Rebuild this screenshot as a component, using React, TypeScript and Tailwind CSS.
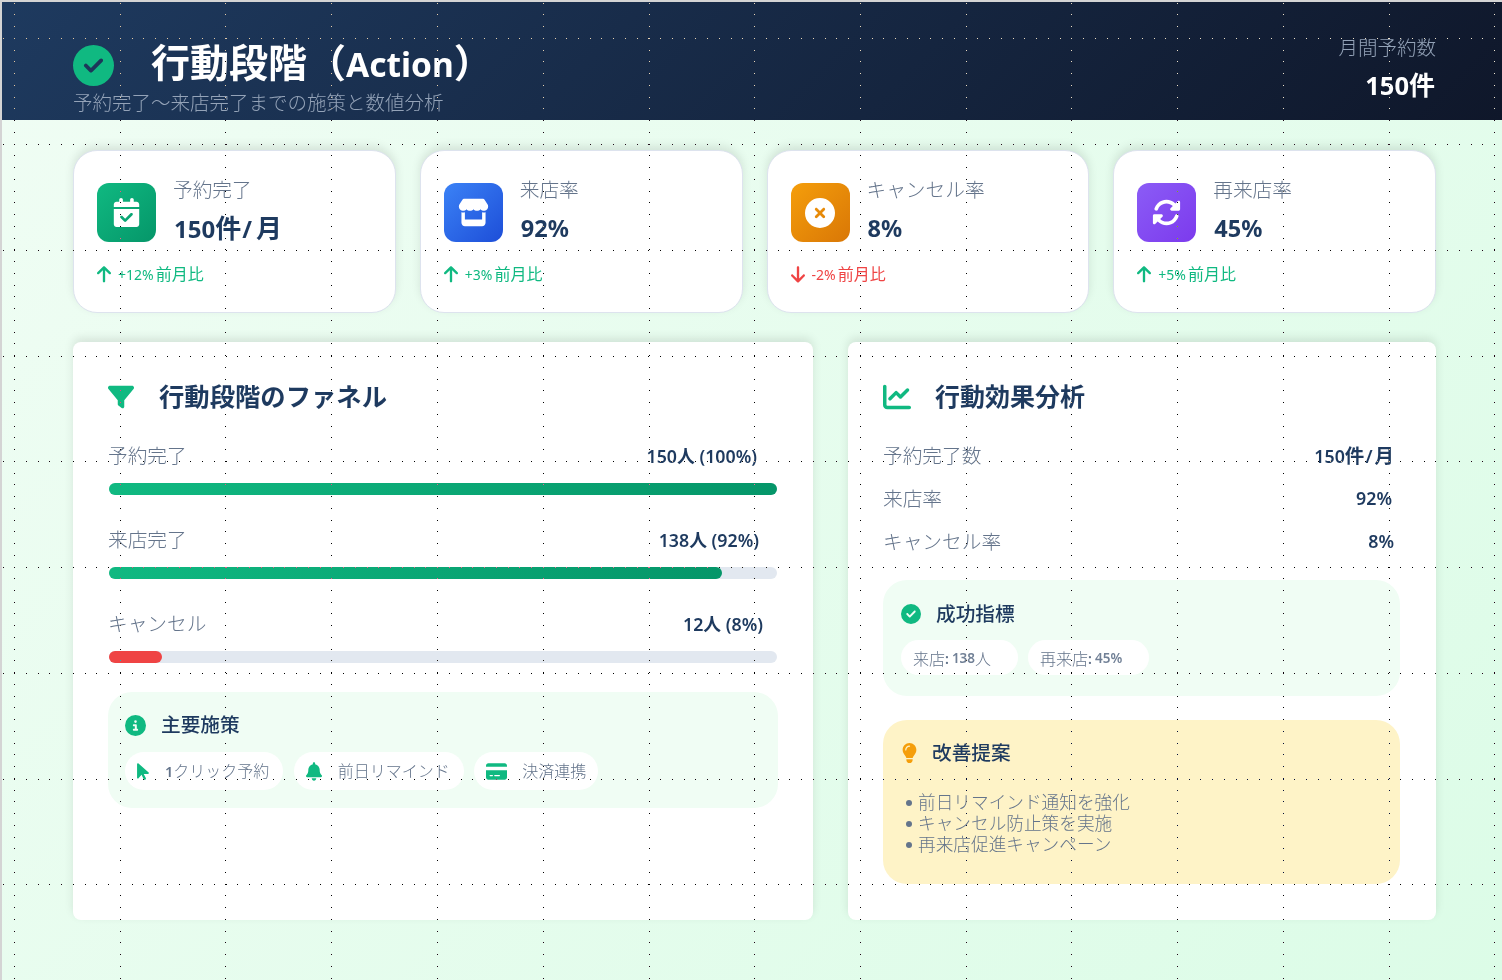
import React from "react";
import {
  FaCircleCheck, FaCalendarCheck, FaStore, FaCircleXmark, FaRotate, FaArrowUp, FaArrowDown,
  FaFilter, FaChartLine, FaCircleInfo, FaArrowPointer, FaBell, FaCreditCard, FaLightbulb,
} from "react-icons/fa6";

const font = { fontFamily: '"Noto Sans", "Noto Sans CJK JP", sans-serif' };

function Dots() {
  const xs = [14, 120, 225, 331, 437, 543, 649, 754, 860, 966, 1071, 1177, 1283, 1389, 1494];
  const ys = [38, 144, 250, 356, 461, 567, 673, 779, 884];
  let d = "";
  for (const x of xs) for (let k = 0; k < 84; k++) d += `M${x} ${Math.round(2.75 + 11.745 * k)}h1v1h-1z`;
  for (const y of ys) for (let k = 0; k < 128; k++) d += `M${Math.round(2.5 + 11.745 * k)} ${y}h1v1h-1z`;
  return (
    <svg className="absolute left-[-2px] top-[-2px] pointer-events-none mix-blend-difference" width="1502" height="980" shapeRendering="crispEdges">
      <path d={d} fill="#fff" />
    </svg>
  );
}

function StatCard({ icon, grad, label, value, delta, up }: { icon: React.ReactNode; grad: string; label: string; value: React.ReactNode; delta: string; up: boolean }) {
  return (
    <div className="h-[163px] rounded-3xl border border-[#dde3ee] bg-white pl-[23px] pt-[32px] shadow-[0_-4px_10px_rgba(0,0,0,0.1)]">
      <div className="flex items-start gap-[17px]">
        <div className={`flex h-[59px] w-[59px] items-center justify-center rounded-xl text-white ${grad}`}>{icon}</div>
        <div className="mt-[-8px]">
          <div className="text-[19.7px] leading-[30px] font-light text-[#64748b]">{label}</div>
          <div className="ml-px mt-[6px] h-[34px] text-[23.5px] leading-[34px] font-bold text-[#1e3a5f]">{value}</div>
        </div>
      </div>
      <div className={`mt-[17px] flex items-center gap-[7px] text-[16px] leading-[24px] ${up ? "text-[#10b981]" : "text-[#ef4444]"}`}>
        {up ? <FaArrowUp className="h-[18.67px] w-[14px]" /> : <FaArrowDown className="h-[18.67px] w-[14px]" />}
        <span><span className="mr-[2px] text-[14px]">{delta}</span>前月比</span>
      </div>
    </div>
  );
}

function FunnelRow({ label, value, pct, red, mr }: { label: string; value: string; pct: string; red?: boolean; mr: string }) {
  return (
    <div className="mb-[30px]">
      <div className="flex items-center justify-between text-[19.7px] leading-[30px]">
        <span className="font-light text-[#64748b]">{label}</span>
        <span className={`text-[17.8px] font-semibold text-[#1e3a5f] ${mr}`}>{value}</span>
      </div>
      <div className="ml-px mr-px mt-[12px] h-[12px] rounded-md bg-[#e2e8f0]">
        <div className={`h-full rounded-md ${pct} ${red ? "bg-[#ef4444]" : "bg-gradient-to-r from-[#10b981] to-[#059669]"}`} />
      </div>
    </div>
  );
}

function Pill({ icon, children, pr }: { icon: React.ReactNode; children: React.ReactNode; pr: string }) {
  return (
    <div className={`flex h-[38px] items-center rounded-full bg-white pl-[12px] text-[16px] text-[#64748b] ${pr}`}>
      {icon}
      <span className="font-light">{children}</span>
    </div>
  );
}

function Chip({ a, b, c }: { a: string; b: string; c?: string }) {
  return (
    <div className="flex h-[35px] items-center rounded-full bg-white pl-[12px] pr-[27px] pt-[2px] text-[16px] font-light text-[#64748b]">
      <span>{a}</span>
      <span className="mr-[3px] text-[14px] font-semibold text-[#64748b]">:</span>
      <span className="text-[13.5px] font-semibold text-[#718096]">{b}</span>
      {c ? <span>{c}</span> : null}
    </div>
  );
}

function Metric({ label, value, mr }: { label: string; value: React.ReactNode; mr: string }) {
  return (
    <div className="flex h-[43px] items-center justify-between text-[19.7px]">
      <span className="font-light text-[#64748b]">{label}</span>
      <span className={`text-[17.8px] font-semibold text-[#1e3a5f] ${mr}`}>{value}</span>
    </div>
  );
}

export default function App() {
  return (
    <div style={font} className="relative h-[980px] w-[1502px] overflow-hidden border-l-2 border-t-2 border-[#d4d4d4] bg-[linear-gradient(135deg,#f0fdf4,#dcfce7)]">
      <header className="flex h-[118px] items-start justify-between bg-[linear-gradient(135deg,#1e3a5f,#0f172a)] pl-[71px] pr-[66px]">
        <div>
          <div className="mt-[34px] flex h-[54px] items-center">
            <FaCircleCheck size={41} className="mt-[4px] text-[#10b981]" />
            <h1 className="ml-[37px] text-[39px] font-bold leading-[54px] text-white">
              行動段階（<span className="text-[33.5px]">Action</span>）
            </h1>
          </div>
          <p className="mt-[0px] text-[19.5px] font-light leading-[26px] text-[#94a3b8]">予約完了〜来店完了までの施策と数値分析</p>
        </div>
        <div className="pt-[31px] text-right">
          <div className="text-[19.5px] font-light leading-[30px] text-[#94a3b8]">月間予約数</div>
          <div className="mr-px mt-[7px] font-bold leading-[30px] text-white">
            <span className="text-[25.5px]">150</span><span className="text-[26px]">件</span>
          </div>
        </div>
      </header>

      <main className="pl-[71px] pr-[66px]">
        <section className="mt-[30px] grid grid-cols-4 gap-6">
          <StatCard grad="bg-[linear-gradient(135deg,#10b981,#059669)]" icon={<FaCalendarCheck size={29} />} label="予約完了"
            value={<><span className="text-[24px]">150</span><span className="text-[26px]">件</span><span className="ml-px mr-[4px]">/</span><span className="text-[26px]">月</span></>} delta="+12%" up />
          <StatCard grad="bg-[linear-gradient(135deg,#3b82f6,#1d4ed8)]" icon={<FaStore size={31} />} label="来店率" value="92%" delta="+3%" up />
          <StatCard grad="bg-[linear-gradient(135deg,#f59e0b,#d97706)]" icon={<FaCircleXmark size={30} />} label="キャンセル率" value="8%" delta="-2%" up={false} />
          <StatCard grad="bg-[linear-gradient(135deg,#8b5cf6,#7c3aed)]" icon={<FaRotate size={29} />} label="再来店率" value="45%" delta="+5%" up />
        </section>

        <section className="mt-[29px] grid grid-cols-[740px_588px] gap-[35px]">
          <div className="h-[578px] rounded-lg bg-white px-[35px] pt-[35px] shadow-[0_-4px_10px_rgba(0,0,0,0.1)]">
            <div className="mb-[24px] flex h-[40px] items-center">
              <FaFilter size={26} className="text-[#10b981]" />
              <h2 className="ml-[25px] mt-[-2px] text-[25.33px] font-bold leading-[40px] text-[#1e3a5f]">行動段階のファネル</h2>
            </div>
            <FunnelRow label="予約完了" value="150人 (100%)" pct="w-full" mr="mr-[21px]" />
            <FunnelRow label="来店完了" value="138人 (92%)" pct="w-[91.8%]" mr="mr-[19px]" />
            <FunnelRow label="キャンセル" value="12人 (8%)" pct="w-[8%]" red mr="mr-[15px]" />
            <div className="mt-[-1px] h-[116px] w-[670px] rounded-3xl bg-[#f0fdf4] px-[17px] pt-[18px]">
              <div className="flex h-[30px] items-center">
                <FaCircleInfo size={21} className="text-[#10b981]" />
                <span className="ml-[15px] text-[19.7px] font-medium text-[#1e3a5f]">主要施策</span>
              </div>
              <div className="mt-[12px] flex gap-[10.5px]">
                <Pill pr="pr-[14px]" icon={<FaArrowPointer className="mr-[16px] h-[19px] w-[12px] text-[#10b981]" />}><span className="text-[14.5px] font-semibold">1</span>クリック予約</Pill>
                <Pill pr="pr-[14px]" icon={<FaBell className="mr-[16px] h-[19px] w-[16px] text-[#10b981]" />}>前日リマインド</Pill>
                <Pill pr="pr-[12px]" icon={<FaCreditCard className="mr-[15px] h-[19px] w-[21px] text-[#10b981]" />}>決済連携</Pill>
              </div>
            </div>
          </div>

          <div className="h-[578px] rounded-lg bg-white px-[35px] pt-[35px] shadow-[0_-4px_10px_rgba(0,0,0,0.1)]">
            <div className="mb-[17px] flex h-[40px] items-center">
              <FaChartLine size={28} className="text-[#10b981]" />
              <h2 className="ml-[24px] mt-[-2px] text-[25px] font-bold leading-[40px] text-[#1e3a5f]">行動効果分析</h2>
            </div>
            <Metric label="予約完了数" value={<>150<span className="text-[19.5px]">件</span><span className="ml-px mr-[2px]">/</span><span className="text-[19.5px]">月</span></>} mr="mr-[7px]" />
            <Metric label="来店率" value="92%" mr="mr-[9px]" />
            <Metric label="キャンセル率" value="8%" mr="mr-[7px]" />
            <div className="mt-[17px] h-[116px] w-[517px] rounded-3xl bg-[#f0fdf4] px-[18px] pt-[19px]">
              <div className="flex h-[30px] items-center">
                <FaCircleCheck size={20} className="text-[#10b981]" />
                <span className="ml-[15px] text-[19.7px] font-medium text-[#1e3a5f]">成功指標</span>
              </div>
              <div className="mt-[11px] flex gap-[10px]">
                <Chip a="来店" b="138" c="人" />
                <Chip a="再来店" b="45%" />
              </div>
            </div>
            <div className="mt-[24px] h-[164px] w-[517px] rounded-3xl bg-[#fef3c7] px-[18px] pt-[18px]">
              <div className="flex h-[30px] items-center">
                <FaLightbulb className="ml-px h-[20px] w-[15px] text-[#f59e0b]" />
                <span className="ml-[15px] text-[19.7px] font-medium text-[#1e3a5f]">改善提案</span>
              </div>
              <ul className="mt-[24px] pl-[5px] text-[17.67px] font-light leading-[21px] text-[#64748b]">
                {["前日リマインド通知を強化", "キャンセル防止策を実施", "再来店促進キャンペーン"].map((t) => (
                  <li key={t} className="flex items-center">
                    <span className="mr-[6px] h-[6px] w-[6px] rounded-full bg-[#64748b]" />
                    {t}
                  </li>
                ))}
              </ul>
            </div>
          </div>
        </section>
      </main>
      <Dots />
    </div>
  );
}
